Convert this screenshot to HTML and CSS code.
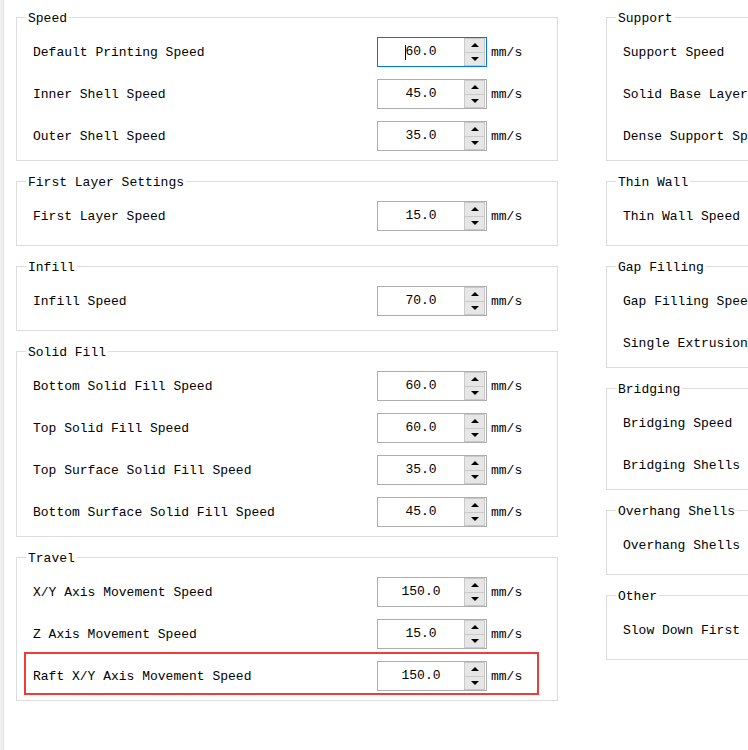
FILE: index.html
```html
<!DOCTYPE html>
<html lang="en">
<head>
<meta charset="utf-8">
<title>Speed Settings</title>
<link rel="stylesheet" href="styles.css">
</head>
<body>
<div class="page">
  <div class="edge"></div>
  <div class="columns">
    <div class="col">
      <section class="group">
        <h2 class="group-title">Speed</h2>
        <div class="row"><span class="label">Default Printing Speed</span><div class="spin focused"><div class="spin-value"><span class="caret"></span>60.0</div><div class="spin-btns"><span class="btn up"></span><span class="btn down"></span></div></div><span class="unit">mm/s</span></div>
        <div class="row"><span class="label">Inner Shell Speed</span><div class="spin"><div class="spin-value">45.0</div><div class="spin-btns"><span class="btn up"></span><span class="btn down"></span></div></div><span class="unit">mm/s</span></div>
        <div class="row"><span class="label">Outer Shell Speed</span><div class="spin"><div class="spin-value">35.0</div><div class="spin-btns"><span class="btn up"></span><span class="btn down"></span></div></div><span class="unit">mm/s</span></div>
      </section>
      <section class="group single">
        <h2 class="group-title">First Layer Settings</h2>
        <div class="row"><span class="label">First Layer Speed</span><div class="spin"><div class="spin-value">15.0</div><div class="spin-btns"><span class="btn up"></span><span class="btn down"></span></div></div><span class="unit">mm/s</span></div>
      </section>
      <section class="group single">
        <h2 class="group-title">Infill</h2>
        <div class="row"><span class="label">Infill Speed</span><div class="spin"><div class="spin-value">70.0</div><div class="spin-btns"><span class="btn up"></span><span class="btn down"></span></div></div><span class="unit">mm/s</span></div>
      </section>
      <section class="group">
        <h2 class="group-title">Solid Fill</h2>
        <div class="row"><span class="label">Bottom Solid Fill Speed</span><div class="spin"><div class="spin-value">60.0</div><div class="spin-btns"><span class="btn up"></span><span class="btn down"></span></div></div><span class="unit">mm/s</span></div>
        <div class="row"><span class="label">Top Solid Fill Speed</span><div class="spin"><div class="spin-value">60.0</div><div class="spin-btns"><span class="btn up"></span><span class="btn down"></span></div></div><span class="unit">mm/s</span></div>
        <div class="row"><span class="label">Top Surface Solid Fill Speed</span><div class="spin"><div class="spin-value">35.0</div><div class="spin-btns"><span class="btn up"></span><span class="btn down"></span></div></div><span class="unit">mm/s</span></div>
        <div class="row"><span class="label">Bottom Surface Solid Fill Speed</span><div class="spin"><div class="spin-value">45.0</div><div class="spin-btns"><span class="btn up"></span><span class="btn down"></span></div></div><span class="unit">mm/s</span></div>
      </section>
      <section class="group">
        <h2 class="group-title">Travel</h2>
        <div class="row"><span class="label">X/Y Axis Movement Speed</span><div class="spin"><div class="spin-value">150.0</div><div class="spin-btns"><span class="btn up"></span><span class="btn down"></span></div></div><span class="unit">mm/s</span></div>
        <div class="row"><span class="label">Z Axis Movement Speed</span><div class="spin"><div class="spin-value">15.0</div><div class="spin-btns"><span class="btn up"></span><span class="btn down"></span></div></div><span class="unit">mm/s</span></div>
        <div class="row highlighted"><span class="label">Raft X/Y Axis Movement Speed</span><div class="spin"><div class="spin-value">150.0</div><div class="spin-btns"><span class="btn up"></span><span class="btn down"></span></div></div><span class="unit">mm/s</span></div>
      </section>
    </div>

    <div class="col">
      <section class="group">
        <h2 class="group-title">Support</h2>
        <div class="row"><span class="label">Support Speed</span><div class="spin"><div class="spin-value">40.0</div><div class="spin-btns"><span class="btn up"></span><span class="btn down"></span></div></div><span class="unit">mm/s</span></div>
        <div class="row"><span class="label">Solid Base Layers Speed</span><div class="spin"><div class="spin-value">20.0</div><div class="spin-btns"><span class="btn up"></span><span class="btn down"></span></div></div><span class="unit">mm/s</span></div>
        <div class="row"><span class="label">Dense Support Speed</span><div class="spin"><div class="spin-value">40.0</div><div class="spin-btns"><span class="btn up"></span><span class="btn down"></span></div></div><span class="unit">mm/s</span></div>
      </section>
      <section class="group single">
        <h2 class="group-title">Thin Wall</h2>
        <div class="row"><span class="label">Thin Wall Speed</span><div class="spin"><div class="spin-value">30.0</div><div class="spin-btns"><span class="btn up"></span><span class="btn down"></span></div></div><span class="unit">mm/s</span></div>
      </section>
      <section class="group">
        <h2 class="group-title">Gap Filling</h2>
        <div class="row"><span class="label">Gap Filling Speed</span><div class="spin"><div class="spin-value">30.0</div><div class="spin-btns"><span class="btn up"></span><span class="btn down"></span></div></div><span class="unit">mm/s</span></div>
        <div class="row"><span class="label">Single Extrusion Fill Speed</span><div class="spin"><div class="spin-value">30.0</div><div class="spin-btns"><span class="btn up"></span><span class="btn down"></span></div></div><span class="unit">mm/s</span></div>
      </section>
      <section class="group">
        <h2 class="group-title">Bridging</h2>
        <div class="row"><span class="label">Bridging Speed</span><div class="spin"><div class="spin-value">30.0</div><div class="spin-btns"><span class="btn up"></span><span class="btn down"></span></div></div><span class="unit">mm/s</span></div>
        <div class="row"><span class="label">Bridging Shells Speed</span><div class="spin"><div class="spin-value">30.0</div><div class="spin-btns"><span class="btn up"></span><span class="btn down"></span></div></div><span class="unit">mm/s</span></div>
      </section>
      <section class="group single">
        <h2 class="group-title">Overhang Shells</h2>
        <div class="row"><span class="label">Overhang Shells Speed</span><div class="spin"><div class="spin-value">30.0</div><div class="spin-btns"><span class="btn up"></span><span class="btn down"></span></div></div><span class="unit">mm/s</span></div>
      </section>
      <section class="group single">
        <h2 class="group-title">Other</h2>
        <div class="row"><span class="label">Slow Down First Layers</span><div class="spin"><div class="spin-value">1</div><div class="spin-btns"><span class="btn up"></span><span class="btn down"></span></div></div><span class="unit"></span></div>
      </section>
    </div>
  </div>
</div>
</body>
</html>
```

FILE: styles.css
```css
html, body {
  margin: 0;
  padding: 0;
  background: #ffffff;
  overflow: hidden;
}

body {
  width: 748px;
  height: 750px;
  font-family: "Liberation Mono", "DejaVu Sans Mono", monospace;
  font-size: 13px;
  color: #000000;
}

.page {
  display: flex;
  height: 750px;
}

.edge {
  flex: 0 0 3px;
  background: #f0f0f0;
  border-right: 1px solid #e2e2e2;
}

.columns {
  display: flex;
  gap: 48px;
  padding: 17px 0 0 12px;
}

.col {
  flex: 0 0 542px;
  width: 542px;
  display: flex;
  flex-direction: column;
  gap: 20px;
}

.group {
  position: relative;
  box-sizing: border-box;
  border: 1px solid #dcdcdc;
  padding: 13px 0 3px 0;
}

.group.single {
  min-height: 65px;
}

.group-title {
  position: absolute;
  top: -8px;
  left: 9px;
  margin: 0;
  padding: 0 2px;
  background: #ffffff;
  font-size: 13px;
  font-weight: normal;
  line-height: 17px;
  color: #000000;
}

.row {
  position: relative;
  display: flex;
  align-items: center;
  height: 42px;
  padding-left: 16px;
}

.row.highlighted::after {
  content: "";
  position: absolute;
  left: 7px;
  right: 18px;
  top: -3px;
  bottom: 2px;
  border: 2px solid #f03a3c;
}

.label {
  flex: 0 0 344px;
  white-space: nowrap;
}

.spin {
  flex: 0 0 110px;
  box-sizing: border-box;
  height: 30px;
  display: flex;
  border: 1px solid #adadad;
  background: #ffffff;
}

.spin.focused {
  border-color: #0078d7;
}

.spin-value {
  flex: 1;
  display: flex;
  align-items: center;
  justify-content: center;
  line-height: 28px;
}

.caret {
  display: inline-block;
  width: 1px;
  height: 15px;
  background: #000000;
  margin-right: -1px;
}

.spin-btns {
  flex: 0 0 21px;
  display: flex;
  flex-direction: column;
  margin-right: 1px;
}

.btn {
  flex: 1;
  box-sizing: border-box;
  background: #e6e6e6;
  border: 1px solid #c9c9c9;
  display: flex;
  align-items: center;
  justify-content: center;
}

.btn.up {
  border-bottom: none;
}

.btn::before {
  content: "";
  width: 0;
  height: 0;
  border-left: 4px solid transparent;
  border-right: 4px solid transparent;
}

.btn.up::before {
  border-bottom: 4px solid #000000;
}

.btn.down::before {
  border-top: 4px solid #000000;
}

.unit {
  margin-left: 4px;
  white-space: nowrap;
}
```
